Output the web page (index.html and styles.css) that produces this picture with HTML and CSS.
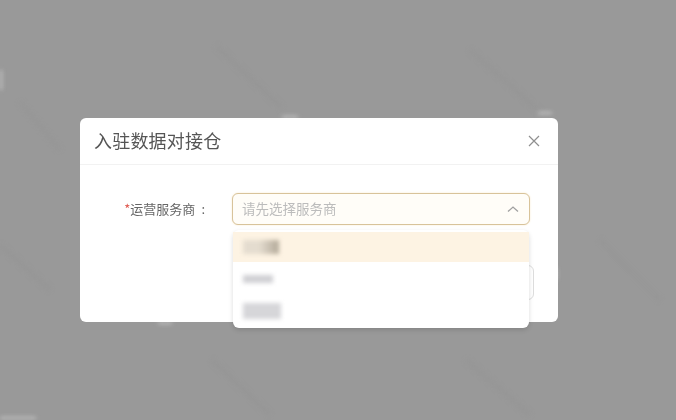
FILE: index.html
```html
<!DOCTYPE html>
<html lang="zh">
<head>
<meta charset="utf-8">
<title>入驻数据对接仓</title>
<link rel="stylesheet" href="styles.css">
</head>
<body>
<svg class="watermark" width="676" height="420" viewBox="0 0 676 420" aria-hidden="true">
  <g class="wm-dark">
    <path d="M216 46L282 108"/>
    <path d="M470 50L540 112"/>
    <path d="M20 102L60 150"/>
    <path d="M0 245L50 290"/>
    <path d="M212 360L270 415"/>
    <path d="M466 360L530 415"/>
    <path d="M600 240L660 300"/>
  </g>
  <g class="wm-light">
    <path d="M1 70V90"/>
    <path d="M282 117H298"/>
    <path d="M538 113H552"/>
    <path d="M556 268V280"/>
    <path d="M0 418H36"/>
    <path d="M158 323H172"/>
  </g>
</svg>
<div class="overlay">
  <section class="modal">
    <header class="modal-header">
      <h2 class="modal-title">入驻数据对接仓</h2>
      <svg class="close-icon" width="14" height="14" viewBox="0 0 14 14" aria-label="关闭"><path d="M2 2L12 12M12 2L2 12"/></svg>
    </header>
    <div class="modal-body">
      <div class="form-row">
        <label class="form-label"><span class="required">*</span>运营服务商<span class="colon">:</span></label>
        <div class="select-wrap">
          <div class="select-box">
            <span class="placeholder">请先选择服务商</span>
            <svg class="chevron" width="14" height="14" viewBox="0 0 14 14" aria-hidden="true"><path d="M2 9.5L7 5L12 9.5"/></svg>
          </div>
          <ul class="dropdown">
            <li class="option option-active"><span class="blur-text blur-a"></span></li>
            <li class="option"><span class="blur-text blur-b"></span></li>
            <li class="option"><span class="blur-text blur-c"></span></li>
          </ul>
        </div>
      </div>
      <div class="footer-row"><span class="ghost-button"></span></div>
    </div>
  </section>
</div>
</body>
</html>
```

FILE: styles.css
```css
* { box-sizing: border-box; }
html, body { margin: 0; height: 100%; }
body {
  position: relative;
  width: 676px;
  height: 420px;
  overflow: hidden;
  background: #999999;
  font-family: "Noto Sans CJK SC", "Liberation Sans", sans-serif;
}
.watermark { position: absolute; left: 0; top: 0; filter: blur(2px); }
.wm-dark path { stroke: #929292; stroke-width: 5; fill: none; opacity: .3; }
.wm-light path { stroke: #d8d8d8; stroke-width: 2; fill: none; opacity: .8; }
.overlay { position: relative; padding: 118px 0 0 80px; }
.modal {
  width: 478px;
  height: 204px;
  background: #fff;
  border-radius: 6px;
  display: flex;
  flex-direction: column;
}
.modal-header {
  height: 47px;
  padding: 0 17px 0 14px;
  border-bottom: 1px solid #f2f2f2;
  display: flex;
  align-items: center;
  justify-content: space-between;
}
.modal-title {
  margin: -3px 0 0;
  font-size: 18px;
  font-weight: 400;
  letter-spacing: .2px;
  color: #555555;
  filter: blur(.5px);
}
.close-icon path { stroke: #8f8f8f; stroke-width: 1.2; fill: none; }
.modal-body { flex: 1; display: flex; flex-direction: column; padding: 28px 28px 0 0; }
.form-row { display: flex; align-items: center; }
.form-label {
  width: 125px;
  margin-top: -2px;
  text-align: right;
  font-size: 13px;
  color: #666666;
  filter: blur(.5px);
}
.required { color: #e0584f; }
.colon { margin-left: 6px; }
.select-wrap { position: relative; margin-left: 27px; width: 298px; }
.select-box {
  height: 32px;
  padding: 0 9px;
  border: 1px solid #d8c39a;
  border-radius: 6px;
  background: #fffdf8;
  display: flex;
  align-items: center;
  justify-content: space-between;
  box-shadow: 0 0 2px #f7e6c8;
}
.placeholder {
  margin-top: -2px;
  font-size: 13.5px;
  color: #bcbcbc;
  filter: blur(.5px);
}
.chevron path { stroke: #a0a0a0; stroke-width: 1.3; fill: none; }
.dropdown {
  position: absolute;
  left: 1px;
  top: 37px;
  width: 296px;
  height: 98px;
  margin: 0;
  padding: 2px 0 0;
  list-style: none;
  background: #fff;
  border-radius: 6px;
  box-shadow: 0 2px 5px rgba(0, 0, 0, .14);
  z-index: 2;
}
.option { height: 32px; padding: 0 12px 0 10px; display: flex; align-items: center; }
.option-active { height: 30px; background: #fdf3e3; margin-bottom: 1px; }
.blur-text { display: block; filter: blur(2px); }
.blur-a { width: 36px; height: 14px; background: linear-gradient(90deg, #e4dccf 0 45%, #b2a898 100%); }
.blur-b { width: 30px; height: 8px; background: #d0d0d4; }
.blur-c { width: 38px; height: 16px; background: #d6d6d9; }
.footer-row { display: flex; justify-content: flex-end; margin-top: 40px; }
.ghost-button {
  width: 80px;
  height: 35px;
  margin-right: -4px;
  border: 1px solid #dddddd;
  border-radius: 6px;
}
```
